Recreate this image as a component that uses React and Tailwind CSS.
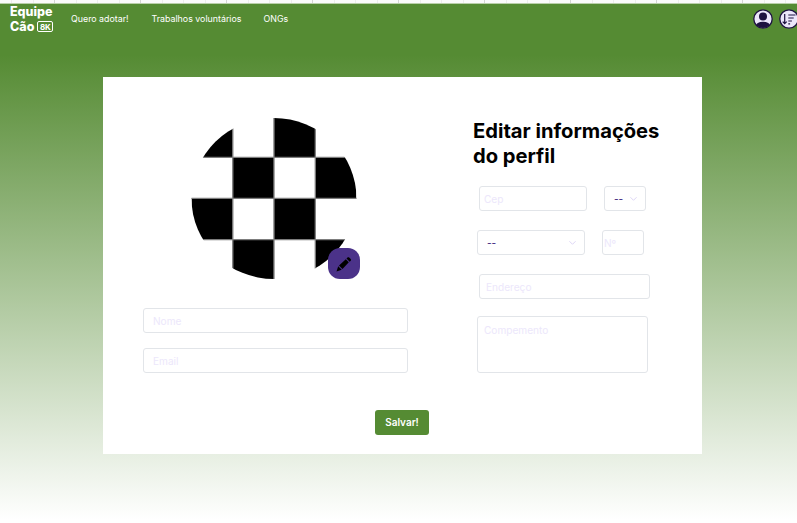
import React from "react";

const border = "border border-[#e2e5e9] rounded-[3px] bg-white";
const field = border + " outline-none text-[10.100px] text-[#4b3487] placeholder:text-[#ece7fb] placeholder:opacity-100";

function Ruler() {
  return (
    <svg className="block h-[4px] w-full shrink-0" viewBox="0 0 797 4">
      <rect width="797" height="4" fill="#fafafa" />
      {Array.from({ length: 37 }, (_, i) => (
        <rect key={i} x={Math.round(11 + i * 21.5)} y="0" width="1" height="4" fill={i % 4 === 2 ? "#d4d4d4" : "#ececec"} />
      ))}
      <rect y="3" width="797" height="1" fill="#b9cfa9" />
    </svg>
  );
}

function UserIcon() {
  return (
    <svg className="size-[20px] shrink-0" viewBox="0 0 20 20">
      <clipPath id="user"><circle cx="10" cy="10" r="9" /></clipPath>
      <circle cx="10" cy="10" r="9.2" fill="#ebe6fb" stroke="#1d1240" strokeWidth="1.3" />
      <circle cx="10" cy="7.4" r="4" fill="#1d1240" />
      <ellipse cx="10" cy="17" rx="7.4" ry="4.3" fill="#1d1240" clipPath="url(#user)" />
    </svg>
  );
}

function SortIcon() {
  return (
    <svg className="size-[20px] shrink-0" viewBox="0 0 20 20" fill="none" stroke="#1d1240">
      <circle cx="10" cy="10" r="9.2" fill="#ebe6fb" strokeWidth="1.3" />
      <path d="M5.7 5v9.6M3.7 12.6l2 2 2-2M9.3 6h7.2M9.3 9h5.4M9.3 12h3.6M9.3 14.8h1.8" strokeWidth="1.2" />
    </svg>
  );
}

function Chevron() {
  return (
    <svg className="h-[4px] w-[7px]" viewBox="0 0 7 4" fill="none" stroke="#ddd6f5" strokeLinecap="round">
      <path d="M.7.5l2.8 2.8L6.300.5" />
    </svg>
  );
}

function Select({ className }) {
  return (
    <button className={border + " flex items-center justify-between h-[25px] text-[10px] font-medium text-[#4b3487] " + className}>
      <span className="ml-px mt-px tracking-[-0.2px]">--</span>
      <Chevron />
    </button>
  );
}

function Avatar() {
  const cells = [[0, 0], [2, 0], [1, 1], [3, 1], [0, 2], [2, 2], [1, 3], [3, 3]];
  return (
    <div className="relative ml-[88px] h-[161px] w-[168px]">
      <svg className="h-[161px] w-[166px]" viewBox="0 0 166 161">
        <clipPath id="face"><ellipse cx="83" cy="80.5" rx="82.5" ry="80.5" /></clipPath>
        <g clipPath="url(#face)">
          {cells.map(([x, y]) => (
            <rect key={`${x}-${y}`} x={0.5 + x * 41.2} y={-2 + y * 41.2} width="41.2" height="41.2" />
          ))}
          <path d="M41.800 0v161M83 0v161M124.300 0v161M0 39.300h166M0 80.400h166M0 121.700h166" stroke="#7d7d7d" strokeWidth="1.3" />
        </g>
      </svg>
      <button className="absolute left-[137px] top-[130px] flex h-[31px] w-[31.500px] items-center justify-center rounded-[12px] bg-[#4b3289]">
        <svg className="size-[16px]" viewBox="0 0 16 16">
          <path d="M.5 15.500l1.700-5.200 3.500 3.500zM3 9.500l6.800-6.300 3 3-6.300 6.800zM10.500 2.500l1-1c.5-.5 1.200-.5 1.700 0l1.500 1.500c.5.500.5 1.200 0 1.700l-1 1z" fill="#000" />
        </svg>
      </button>
    </div>
  );
}

export default function App() {
  return (
    <div className="flex h-[523px] w-[797px] flex-col overflow-hidden bg-[linear-gradient(to_bottom,#558b33_55px,#ffffff_520px)] font-['Inter',sans-serif]">
      <Ruler />
      <header className="flex h-[73px] shrink-0 items-start pl-[10px] text-white">
        <div className="w-[61px] text-[12.500px] font-extrabold leading-[15px]">
          <div>Equipe</div>
          <div className="flex items-center gap-[3px]">
            Cão
            <span className="flex h-[11px] w-[16px] shrink-0 items-center justify-center rounded-[2px] border border-white text-[8px] font-bold leading-none">8K</span>
          </div>
        </div>
        <nav className="mt-[8px] flex text-[8.850px] leading-[14px]">
          <a className="w-[80.500px]">Quero adotar!</a>
          <a className="w-[112px]">Trabalhos voluntários</a>
          <a>ONGs</a>
        </nav>
        <div className="ml-auto -mr-[2px] mt-[5px] flex gap-[6px]">
          <UserIcon />
          <SortIcon />
        </div>
      </header>
      <main className="ml-[103px] flex h-[377px] w-[598.500px] shrink-0 flex-col bg-white">
        <div className="flex h-[333px]">
          <section className="flex w-[370px] flex-col pt-[41px]">
            <Avatar />
            <div className="ml-[40px] mt-[29px] flex flex-col gap-[15px]">
              <input className={field + " h-[25px] w-[264.500px] px-[9px]"} placeholder="Nome" />
              <input className={field + " h-[25px] w-[264.500px] px-[9px]"} placeholder="Email" />
            </div>
          </section>
          <section className="flex flex-col pt-[41px]">
            <h1 className="text-[20.150px] font-bold leading-[25px] text-black">Editar informações<br />do perfil</h1>
            <div className="ml-[6px] mt-[18px] flex gap-[17px]">
              <input className={field + " h-[25px] w-[108px] px-[4px]"} placeholder="Cep" />
              <Select className="w-[42px] px-[8px]" />
            </div>
            <div className="ml-[4px] mt-[19px] flex gap-[17px]">
              <Select className="w-[108px] px-[8px]" />
              <input className={field + " h-[25px] w-[42px] px-px"} placeholder="Nº" />
            </div>
            <input className={field + " ml-[6px] mt-[19px] h-[25px] w-[171px] px-[6px]"} placeholder="Endereço" />
            <textarea className={field + " ml-[4px] mt-[17px] h-[57px] w-[171px] resize-none px-[6px] py-[5px] leading-[16px]"} placeholder="Compemento" />
          </section>
        </div>
        <button className="ml-[272px] h-[25px] w-[54px] rounded-[3px] bg-[#558b33] text-[10px] font-semibold text-white">Salvar!</button>
      </main>
    </div>
  );
}
